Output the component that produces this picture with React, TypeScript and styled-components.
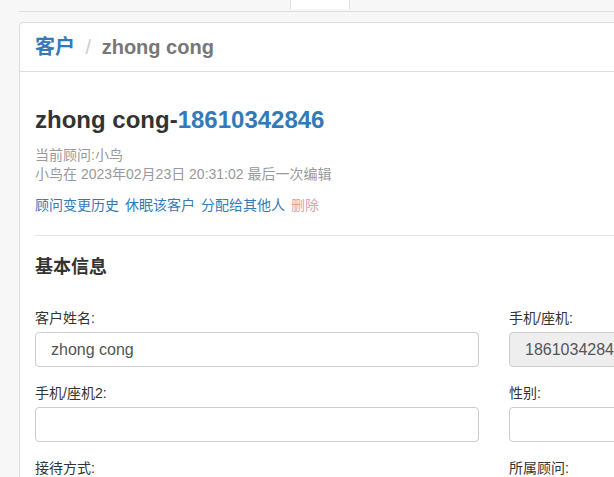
import React from 'react';
import styled, { createGlobalStyle } from 'styled-components';

const GlobalStyle = createGlobalStyle`
  html, body {
    margin: 0;
    padding: 0;
    overflow: hidden;
    background: #f7f7f7;
  }
  body {
    font-family: "Liberation Sans", Arial, "Noto Sans CJK SC", sans-serif;
    font-size: 14px;
    color: #333;
  }
`;

const Page = styled.div`
  width: 1000px;
  padding-left: 19px;
`;

const TabStrip = styled.div`
  height: 11px;
  border-bottom: 1px solid #ddd;
  padding-left: 271px;
  display: flex;
  align-items: flex-start;
`;

const Tab = styled.div`
  width: 58px;
  height: 9px;
  background: #fff;
  border-left: 1px solid #ddd;
  border-right: 1px solid #ddd;
`;

const Card = styled.div`
  margin-top: 10px;
  background: #fff;
  border: 1px solid #ddd;
  border-radius: 4px;
`;

const CardHeader = styled.div`
  height: 48px;
  line-height: 48px;
  padding: 0 15px;
  border-bottom: 1px solid #ddd;
`;

const Crumbs = styled.ol`
  margin: 0;
  padding: 0;
  list-style: none;
  font-size: 20px;
  font-weight: bold;

  & > li + li::before {
    content: "/\\00a0";
    padding: 0 5px;
    color: #ccc;
    font-weight: normal;
  }
`;

const Crumb = styled.li<{ $active?: boolean }>`
  display: inline-block;
  color: ${(p) => (p.$active ? '#777' : '#337ab7')};
`;

const CardBody = styled.div`
  padding: 0 15px 15px;
`;

const Title = styled.h3`
  margin: 35px 0 13px;
  font-size: 24px;
  line-height: 1.1;
  font-weight: bold;
  color: #333;
`;

const Phone = styled.span`
  color: #337ab7;
`;

const Meta = styled.div`
  color: #999;
  line-height: 19px;
`;

const Actions = styled.div`
  display: flex;
  gap: 6px;
  margin-top: 11px;
  line-height: 20px;
`;

const ActionLink = styled.a<{ $danger?: boolean }>`
  color: ${(p) => (p.$danger ? '#e0a0a6' : '#337ab7')};
  text-decoration: none;
  cursor: pointer;
`;

const Divider = styled.hr`
  margin: 20px 0 0;
  border: 0;
  border-top: 1px solid #e5e5e5;
`;

const SectionTitle = styled.h4`
  margin: 21px 0 0;
  font-size: 18px;
  line-height: 20px;
  font-weight: bold;
  color: #333;
`;

const FormGrid = styled.div`
  display: grid;
  grid-template-columns: 444px 444px;
  column-gap: 30px;
  margin-top: 31px;
`;

const Field = styled.div`
  margin-bottom: 16px;
`;

const Label = styled.label`
  display: block;
  margin-bottom: 4px;
  line-height: 20px;
  color: #333;
`;

const Input = styled.input`
  box-sizing: border-box;
  width: 100%;
  height: 35px;
  padding: 0 15px;
  font-family: "Liberation Sans", Arial, "Noto Sans CJK SC", sans-serif;
  font-size: 16px;
  color: #555;
  background: ${(p) => (p.disabled ? '#eee' : '#fff')};
  border: 1px solid #ccc;
  border-radius: 4px;
  outline: none;
`;

const fields = [
  { label: '客户姓名:', value: 'zhong cong' },
  { label: '手机/座机:', value: '18610342846', disabled: true },
  { label: '手机/座机2:', value: '' },
  { label: '性别:', value: '' },
  { label: '接待方式:', value: '' },
  { label: '所属顾问:', value: '' },
];

export default function App() {
  return (
    <Page>
      <GlobalStyle />
      <TabStrip>
        <Tab />
      </TabStrip>
      <Card>
        <CardHeader>
          <Crumbs>
            <Crumb>客户</Crumb> <Crumb $active>zhong cong</Crumb>
          </Crumbs>
        </CardHeader>
        <CardBody>
          <Title>
            zhong cong-<Phone>18610342846</Phone>
          </Title>
          <Meta>当前顾问:小鸟</Meta>
          <Meta>小鸟在 2023年02月23日 20:31:02 最后一次编辑</Meta>
          <Actions>
            <ActionLink>顾问变更历史</ActionLink>
            <ActionLink>休眠该客户</ActionLink>
            <ActionLink>分配给其他人</ActionLink>
            <ActionLink $danger>删除</ActionLink>
          </Actions>
          <Divider />
          <SectionTitle>基本信息</SectionTitle>
          <FormGrid>
            {fields.map((f) => (
              <Field key={f.label}>
                <Label>{f.label}</Label>
                <Input defaultValue={f.value} disabled={f.disabled} readOnly={!f.disabled} />
              </Field>
            ))}
          </FormGrid>
        </CardBody>
      </Card>
    </Page>
  );
}
